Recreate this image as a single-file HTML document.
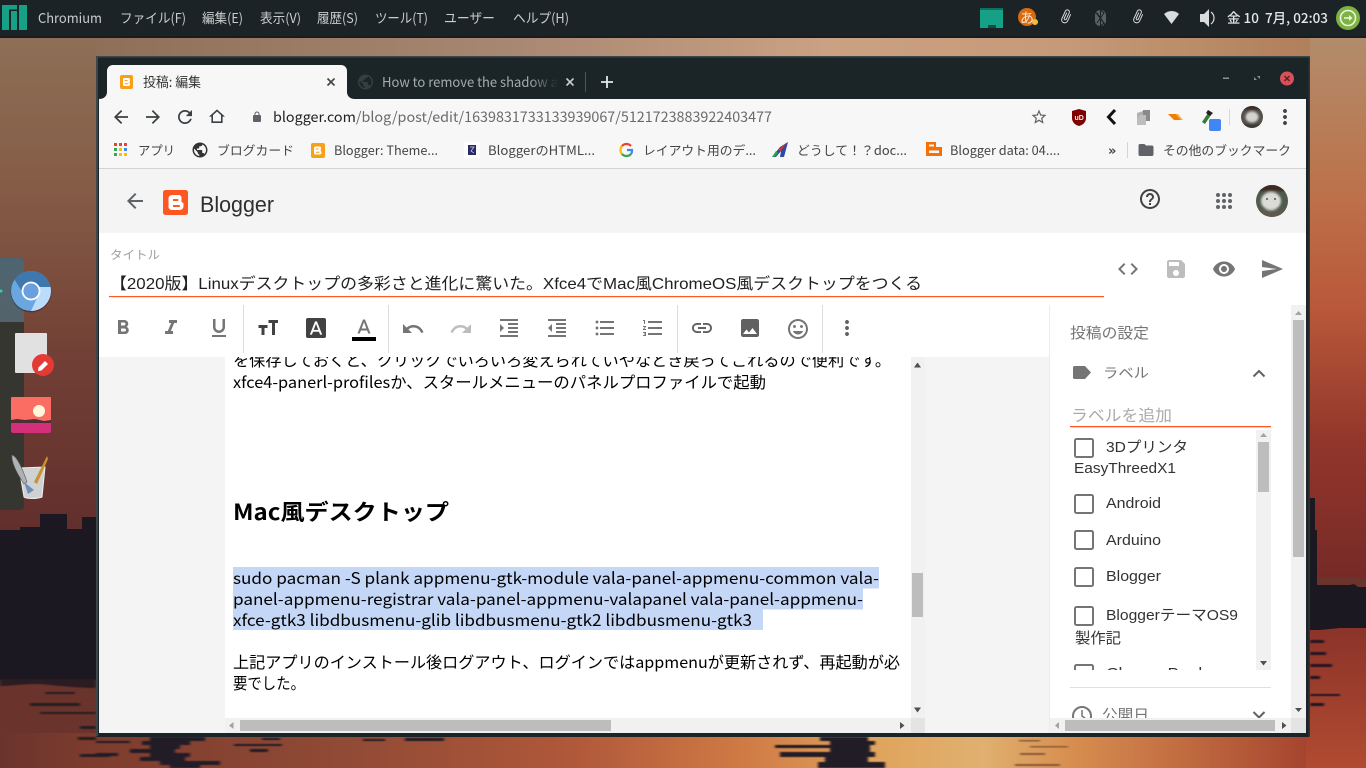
<!DOCTYPE html>
<html lang="ja">
<head>
<meta charset="utf-8">
<title>投稿: 編集</title>
<style>
html,body{margin:0;padding:0;width:1366px;height:768px;overflow:hidden;background:#222}
svg{display:block;position:absolute;left:0;top:0}
text{white-space:pre}
.p{font:13.500px "Noto Sans CJK JP",sans-serif;fill:#c8cdcd}
.ui{font:13.500px "Noto Sans CJK JP",sans-serif;fill:#444}
.bm{font:12.500px "Noto Sans CJK JP",sans-serif;fill:#444}
.ti{font:16px "Liberation Sans","Noto Sans CJK JP",sans-serif;fill:#212121}
.b{font:16px "Noto Sans CJK JP",sans-serif;fill:#000}
.s{font:15px "Liberation Sans","Noto Sans CJK JP",sans-serif;fill:#333}
.g{fill:#757575}
</style>
</head>
<body>
<svg width="1366" height="768" viewBox="0 0 1366 768" xmlns="http://www.w3.org/2000/svg">
<defs>
<linearGradient id="lc" x1="0" y1="0" x2="0" y2="1"><stop offset="0" stop-color="#8e6f56"/><stop offset=".3" stop-color="#855c46"/><stop offset=".65" stop-color="#713f35"/><stop offset="1" stop-color="#622e2c"/></linearGradient>
<linearGradient id="rc" x1="0" y1="0" x2="0" y2="1"><stop offset="0" stop-color="#b28c6b"/><stop offset=".3" stop-color="#bd7049"/><stop offset=".5" stop-color="#b9583a"/><stop offset=".75" stop-color="#92362b"/><stop offset="1" stop-color="#772a27"/></linearGradient>
<linearGradient id="ts" x1="0" y1="0" x2="1" y2="0"><stop offset="0" stop-color="#8f6f57"/><stop offset=".35" stop-color="#a98873"/><stop offset=".6" stop-color="#caa182"/><stop offset=".8" stop-color="#c59a78"/><stop offset="1" stop-color="#b07f5c"/></linearGradient>
<linearGradient id="bs" gradientUnits="userSpaceOnUse" x1="0" y1="0" x2="1366" y2="0"><stop offset="0" stop-color="#6a342d"/><stop offset=".07" stop-color="#7e3c2e"/><stop offset=".25" stop-color="#904a35"/><stop offset=".42" stop-color="#b0583a"/><stop offset=".545" stop-color="#d07a45"/><stop offset=".64" stop-color="#e0a45c"/><stop offset=".72" stop-color="#e0b070"/><stop offset=".78" stop-color="#d89050"/><stop offset=".87" stop-color="#c06a40"/><stop offset=".96" stop-color="#a5432e"/><stop offset="1" stop-color="#a5432e"/></linearGradient>
<linearGradient id="rb" x1="0" y1="0" x2="0" y2="1"><stop offset="0" stop-color="#8a3229"/><stop offset="1" stop-color="#b04b31"/></linearGradient>
<linearGradient id="dk" x1="0" y1="0" x2="0" y2="1"><stop offset="0" stop-color="#4d6470"/><stop offset="1" stop-color="#54636a"/></linearGradient>
<linearGradient id="tf" gradientUnits="userSpaceOnUse" x1="530" y1="0" x2="558" y2="0"><stop offset="0" stop-color="#a4abad"/><stop offset="1" stop-color="#a4abad" stop-opacity="0"/></linearGradient>
<clipPath id="ed"><rect x="225" y="357" width="686" height="361"/></clipPath>
<clipPath id="ll"><rect x="1070" y="430" width="186" height="240"/></clipPath>
<clipPath id="sb"><rect x="1050" y="305" width="241" height="413"/></clipPath>
<clipPath id="av1"><circle cx="1252" cy="117" r="11"/></clipPath>
<clipPath id="av2"><circle cx="1272" cy="201" r="16"/></clipPath>
<filter id="bl" x="-5%" y="-20%" width="110%" height="140%"><feGaussianBlur stdDeviation="1.200 .5"/></filter>
<filter id="bf" x="-30%" y="-30%" width="160%" height="160%"><feGaussianBlur stdDeviation="1"/></filter>
</defs>

<!-- wallpaper -->
<rect x="0" y="38" width="1366" height="730" fill="#6a342d"/>
<rect x="0" y="38" width="100" height="500" fill="url(#lc)"/>
<rect x="1306" y="38" width="60" height="540" fill="url(#rc)"/>
<rect x="96" y="38" width="1214" height="20" fill="url(#ts)"/>
<rect x="0" y="733" width="1366" height="35" fill="url(#bs)"/>
<rect x="1306" y="620" width="60" height="148" fill="url(#rb)"/>
<path d="M0 530H20V527H40V514H67V529H82V517H96V680H0Z" fill="#1c1822"/>
<g filter="url(#bl)">
<path d="M0 679H96V688C80 688 60 686 40 684 20 684 10 686 0 686Z" fill="#2b1c22"/>
<path d="M30 703H80V706H30ZM45 692H75V694H45ZM40 712H96V714H40ZM80 726H96V729H80ZM78 737H96V740H78ZM80 754H110V757H80Z" fill="#251b22"/>
<path d="M1310 640H1324V643H1310ZM1310 652H1326V655H1310ZM1310 664H1332V667H1310ZM1310 676H1320V679H1310ZM1310 694H1340V696H1310ZM1310 703H1324V706H1310Z" fill="#211820"/>
<g fill="#221a26">
<path d="M150 737H205V741H190V745H180V749H175V753H190V757H185V761H220V765H200V768H170V765H160V761H140V757H150V753H130V749H150V745H142V741H150Z"/>
<path d="M820 737H868V741H875V745H870V748H870V752H875V757H868V762H885V768H818V762H825V757H780V752H830V748H775V745H830V741H820Z"/>
<path d="M234 744H282V746H234ZM250 749H268V752H250ZM262 738H280V740H262ZM363 739H385V741H363ZM405 738H444V741H405ZM96 741H130V743H96ZM96 753H118V756H96Z"/>
</g>
<path d="M1019 740H1040V741.500H1019ZM1030 746H1068V747.500H1030ZM1020 753H1045V755H1020ZM1015 764H1060V766H1015Z" fill="#8a5a3a"/>
</g>
<path d="M1310 498H1315V530H1317V585H1350L1354 584L1358 587H1366V628H1340L1320 630H1310Z" fill="#1c1822"/>

<!-- top panel -->
<rect x="0" y="0" width="1366" height="37" fill="#1b2326"/>
<rect x="0" y="36.500" width="1366" height="1" fill="#10161a"/>
<path d="M2 5H17V9.500H9V30H2ZM11 11H17V30H11ZM19 5H27V30H19Z" fill="#16a085"/>
<text class="p" x="38" y="23" textLength="64" lengthAdjust="spacingAndGlyphs">Chromium</text>
<text class="p" x="120" y="23" textLength="66" lengthAdjust="spacingAndGlyphs">ファイル(F)</text>
<text class="p" x="202" y="23" textLength="41" lengthAdjust="spacingAndGlyphs">編集(E)</text>
<text class="p" x="260" y="23" textLength="41" lengthAdjust="spacingAndGlyphs">表示(V)</text>
<text class="p" x="317" y="23" textLength="41" lengthAdjust="spacingAndGlyphs">履歴(S)</text>
<text class="p" x="375" y="23" textLength="53" lengthAdjust="spacingAndGlyphs">ツール(T)</text>
<text class="p" x="444" y="23" textLength="51" lengthAdjust="spacingAndGlyphs">ユーザー</text>
<text class="p" x="513" y="23" textLength="56" lengthAdjust="spacingAndGlyphs">ヘルプ(H)</text>
<text class="p" x="1227" y="23" textLength="101" lengthAdjust="spacingAndGlyphs" style="fill:#e4e7e7;font-weight:500">金 10  7月, 02:03</text>
<!-- tray -->
<rect x="980" y="8" width="23" height="20" fill="#16a085"/>
<rect x="980" y="8" width="23" height="2" fill="#0f6f5e"/>
<rect x="988" y="25" width="8" height="3" fill="#0b4f45"/>
<circle cx="1027" cy="17" r="9" fill="#d96a10"/>
<text x="1020" y="23" style="font:14px 'Noto Sans CJK JP',sans-serif;fill:#f6e6d2">あ</text>
<circle cx="1035" cy="22" r="3" fill="#f3b942"/>
<g fill="#d9dcdc"><path transform="translate(1056,10) rotate(25 12 12) scale(.65)" d="M16.500 6v11.500c0 2.210-1.790 4-4 4s-4-1.790-4-4V5c0-1.380 1.120-2.500 2.500-2.500s2.500 1.120 2.500 2.500v10.500c0 .55-.45 1-1 1s-1-.45-1-1V6H10v9.500c0 1.380 1.120 2.500 2.500 2.500s2.500-1.120 2.500-2.500V5c0-2.210-1.790-4-4-4S7 2.790 7 5v12.500c0 3.040 2.460 5.500 5.500 5.500s5.500-2.460 5.500-5.500V6h-1.500z"/>
<path transform="translate(1128,10) rotate(25 12 12) scale(.65)" d="M16.500 6v11.500c0 2.210-1.790 4-4 4s-4-1.790-4-4V5c0-1.380 1.120-2.500 2.500-2.500s2.500 1.120 2.500 2.500v10.500c0 .55-.45 1-1 1s-1-.45-1-1V6H10v9.500c0 1.380 1.120 2.500 2.500 2.500s2.500-1.120 2.500-2.500V5c0-2.210-1.790-4-4-4S7 2.790 7 5v12.500c0 3.040 2.460 5.500 5.500 5.500s5.500-2.460 5.500-5.500V6h-1.500z"/>
<path d="M1164 14C1168.500 10 1175 10 1179 14L1171.500 24Z"/></g>
<rect x="1095" y="10" width="11" height="16" rx="5" fill="#5a6163"/>
<path d="M1097 13L1104 23L1100.500 26V10L1104 13L1097 23M1094 10L1106 26" stroke="#1b2326" stroke-width="1" fill="none"/>
<path d="M1200 14H1204L1209 9V27L1204 22H1200Z" fill="#d9dcdc"/>
<path d="M1211 12C1215 15 1215 21 1211 24" stroke="#d9dcdc" stroke-width="1.200" fill="none"/>
<circle cx="1348" cy="18" r="12" fill="#7cb342"/>
<circle cx="1348" cy="18" r="7.500" fill="none" stroke="#eef5e0" stroke-width="1.600"/>
<path d="M1344 17.200H1349V15L1352.500 18L1349 21V18.800H1344Z" fill="#eef5e0"/>

<!-- window -->
<rect x="96" y="56" width="1214" height="681" rx="2" fill="#1b2427"/>
<rect x="96" y="56" width="1214" height="1.500" fill="#3d4648"/>
<rect x="96" y="57" width="2" height="679" fill="#3d4648"/>
<rect x="1308.500" y="58" width="1.500" height="678" fill="#2c3538"/>
<!-- tabs -->
<path d="M99 99C104 99 107 96 107 92V71C107 67.500 109.500 65 113 65H341C344.500 65 347 67.500 347 71V92C347 96 350 99 355 99Z" fill="#f7f7f7"/>
<rect x="120" y="75" width="13" height="14" rx="2" fill="#f9a01b"/>
<path d="M124 78H128.500C129.300 78 130 78.700 130 79.500V80.800C130 81.500 129.600 82 129 82.200C129.600 82.400 130 83 130 83.700V84.500C130 85.500 129.300 86 128.500 86H124.500C123.700 86 123 85.500 123 84.700V79C123 78.400 123.400 78 124 78Z" fill="#fff"/>
<path d="M124.700 80H127.500V81H124.700ZM124.700 83.300H128.400V84.300H124.700Z" fill="#f9a01b"/>
<text class="ui" x="143" y="87" textLength="58" lengthAdjust="spacingAndGlyphs" style="fill:#333">投稿: 編集</text>
<path d="M327.500 78.500L334.500 85.500M334.500 78.500L327.500 85.500" stroke="#444" stroke-width="1.600"/>
<path transform="translate(356.500,73) scale(.75)" fill="#353e41" d="M12 2C6.480 2 2 6.480 2 12s4.480 10 10 10 10-4.480 10-10S17.520 2 12 2zm-1 17.930c-3.950-.49-7-3.850-7-7.930 0-.62.08-1.210.21-1.790L9 15v1c0 1.100.9 2 2 2v1.930zm6.900-2.540c-.26-.81-1-1.390-1.900-1.390h-1v-3c0-.55-.45-1-1-1H8v-2h2c.55 0 1-.45 1-1V7h2c1.100 0 2-.9 2-2v-.41c2.930 1.190 5 4.060 5 7.410 0 2.080-.8 3.970-2.100 5.390z"/>
<text class="ui" x="382" y="87" textLength="176" lengthAdjust="spacingAndGlyphs" style="fill:url(#tf)">How to remove the shadow a</text>
<path d="M566.500 78.500L573.500 85.500M573.500 78.500L566.500 85.500" stroke="#c6cbcc" stroke-width="1.600"/>
<rect x="585" y="72" width="1" height="20" fill="#4c5558"/>
<path d="M607 76V88M601 82H613" stroke="#e6e8e8" stroke-width="1.800"/>
<rect x="1223" y="77.500" width="6" height="1.500" fill="#8b9294"/>
<path d="M1254 80L1254 77L1257 80ZM1260 76L1260 79L1257 76Z" fill="#8b9294"/>
<circle cx="1287" cy="78.500" r="7" fill="#d9505a"/>
<path d="M1284.500 76L1289.500 81M1289.500 76L1284.500 81" stroke="#5a1f25" stroke-width="1.500"/>

<!-- toolbar -->
<rect x="99" y="99" width="1207" height="634" fill="#fff"/>
<rect x="99" y="99" width="1207" height="69" fill="#f7f7f7"/>
<rect x="99" y="168" width="1207" height="1" fill="#d2d2d2"/>
<g fill="#3c4043">
<path transform="translate(110.500,106.500) scale(.875)" d="M20 11H7.830l5.590-5.590L12 4l-8 8 8 8 1.410-1.410L7.830 13H20v-2z"/>
<path transform="translate(142.500,106.500) scale(.875)" d="M12 4l-1.410 1.410L16.170 11H4v2h12.170l-5.580 5.590L12 20l8-8z"/>
<path transform="translate(174.500,106.500) scale(.875)" d="M17.650 6.350C16.200 4.900 14.210 4 12 4c-4.420 0-7.990 3.580-7.990 8s3.570 8 7.990 8c3.730 0 6.840-2.550 7.730-6h-2.080c-.82 2.330-3.040 4-5.650 4-3.310 0-6-2.690-6-6s2.690-6 6-6c1.660 0 3.140.69 4.220 1.780L13 11h7V4l-2.350 2.350z"/>
<path transform="translate(207.400,107) scale(.8)" fill-rule="evenodd" d="M12 3L2 12h3v8h14v-8h3L12 3zM12 5.690l5 4.500V18H7v-7.810l5-4.500z"/>
</g>
<path transform="translate(251,111) scale(.5)" fill="#5f6368" d="M18 8h-1V6c0-2.760-2.240-5-5-5S7 3.240 7 6v2H6c-1.100 0-2 .9-2 2v10c0 1.100.9 2 2 2h12c1.100 0 2-.9 2-2V10c0-1.100-.9-2-2-2zM15.100 8H8.900V6c0-1.710 1.390-3.100 3.100-3.100 1.710 0 3.100 1.390 3.100 3.100v2z"/>
<text x="273" y="122" textLength="499" lengthAdjust="spacingAndGlyphs" style="font:14px 'Noto Sans CJK JP',sans-serif;fill:#6a6a6a"><tspan fill="#222">blogger.com</tspan>/blog/post/edit/1639831733133939067/5121723883922403477</text>
<path transform="translate(1030,108) scale(.75)" fill="#5f6368" d="M22 9.240l-7.190-.62L12 2 9.190 8.630 2 9.240l5.460 4.730L5.820 21 12 17.270 18.180 21l-1.630-7.030L22 9.240zM12 15.400l-3.760 2.270 1-4.280-3.320-2.880 4.380-.38L12 6.100l1.710 4.040 4.380.38-3.320 2.880 1 4.280L12 15.400z"/>
<path d="M1072 111L1079 109L1086 111V118C1086 122 1083 125 1079 126C1075 125 1072 122 1072 118Z" fill="#800000"/>
<text x="1074.500" y="120" style="font:bold 7px 'Liberation Sans',sans-serif;fill:#eee">uD</text>
<path d="M1115 110L1108.500 117L1115 124" fill="none" stroke="#111" stroke-width="3"/>
<path d="M1137 113L1143 111V123H1137Z" fill="#b0b0b0"/><path d="M1143 110H1150V121H1143Z" fill="#8a8a8a"/><path d="M1141 115H1146V125H1137V118Z" fill="#bdbdbd"/>
<path d="M1168 114H1176L1181 120H1174Z" fill="#f57c00"/><path d="M1176 114H1178L1183 120H1181Z" fill="#fbb040"/>
<path d="M1202 122L1208 113L1211 115L1205 124Z" fill="#2e7d32"/><path d="M1208 110L1213 113L1210 116L1206 113Z" fill="#222"/>
<rect x="1209" y="119" width="12" height="12" rx="2" fill="#4285f4"/>
<rect x="1229" y="109" width="1" height="16" fill="#d8d8d8"/>
<g clip-path="url(#av1)"><rect x="1240" y="105" width="24" height="24" fill="#55524e"/><g filter="url(#bf)"><ellipse cx="1252" cy="117" rx="6.500" ry="5.500" fill="#d4d4cf"/><rect x="1241" y="104" width="22" height="6" fill="#3e2f28"/><rect x="1241" y="124" width="22" height="5" fill="#3a3a34"/></g></g>
<path transform="translate(1273,105)" fill="#444" d="M12 8c1.100 0 2-.9 2-2s-.9-2-2-2-2 .9-2 2 .9 2 2 2zm0 2c-1.100 0-2 .9-2 2s.9 2 2 2 2-.9 2-2-.9-2-2-2zm0 6c-1.100 0-2 .9-2 2s.9 2 2 2 2-.9 2-2-.9-2-2-2z"/>

<!-- bookmarks -->
<g>
<rect x="114" y="143" width="3" height="3" fill="#ea4335"/><rect x="119" y="143" width="3" height="3" fill="#ea4335"/><rect x="124" y="143" width="3" height="3" fill="#ea4335"/>
<rect x="114" y="148" width="3" height="3" fill="#34a853"/><rect x="119" y="148" width="3" height="3" fill="#fbbc05"/><rect x="124" y="148" width="3" height="3" fill="#4285f4"/>
<rect x="114" y="153" width="3" height="3" fill="#34a853"/><rect x="119" y="153" width="3" height="3" fill="#fbbc05"/><rect x="124" y="153" width="3" height="3" fill="#fbbc05"/>
</g>
<text class="bm" x="138" y="155" textLength="37" lengthAdjust="spacingAndGlyphs">アプリ</text>
<path transform="translate(191,141) scale(.75)" fill="#333" d="M12 2C6.480 2 2 6.480 2 12s4.480 10 10 10 10-4.480 10-10S17.520 2 12 2zm-1 17.930c-3.950-.49-7-3.850-7-7.930 0-.62.08-1.210.21-1.790L9 15v1c0 1.100.9 2 2 2v1.930zm6.900-2.540c-.26-.81-1-1.390-1.900-1.390h-1v-3c0-.55-.45-1-1-1H8v-2h2c.55 0 1-.45 1-1V7h2c1.100 0 2-.9 2-2v-.41c2.930 1.190 5 4.060 5 7.410 0 2.080-.8 3.970-2.100 5.390z"/>
<text class="bm" x="217" y="155" textLength="77" lengthAdjust="spacingAndGlyphs">ブログカード</text>
<rect x="311" y="143" width="14" height="15" rx="2" fill="#f9a01b"/>
<path d="M315.500 146.500H319.500C320.500 146.500 321 147 321 148V149.500C321 150 320.700 150.500 320.200 150.700C320.700 151 321.500 151.500 321.500 152V153C321.500 154 320.500 154.500 319.500 154.500H315.500C314.700 154.500 314 154 314 153.200V148C314 147 314.700 146.500 315.500 146.500Z" fill="#fff"/>
<path d="M316 148.500H318.500V149.500H316ZM316 151.800H319.500V152.800H316Z" fill="#f9a01b"/>
<text class="bm" x="334" y="155" textLength="104" lengthAdjust="spacingAndGlyphs">Blogger: Theme...</text>
<rect x="464" y="142" width="16" height="16" fill="#fff"/><rect x="468" y="145" width="8" height="10" fill="#2a2a6a"/><path d="M470 147H474L471 151L474 153" stroke="#ddd" fill="none" stroke-width=".7"/>
<text class="bm" x="488" y="155" textLength="107" lengthAdjust="spacingAndGlyphs">BloggerのHTML...</text>
<g fill="none" stroke-width="2.200"><path d="M631 146A6 6 0 0 0 622 146" stroke="#ea4335"/><path d="M622 146A6 6 0 0 0 622 154" stroke="#fbbc05"/><path d="M622 154A6 6 0 0 0 631 154" stroke="#34a853"/><path d="M631 154A6 6 0 0 0 632 150H627" stroke="#4285f4"/></g>
<text class="bm" x="643" y="155" textLength="113" lengthAdjust="spacingAndGlyphs">レイアウト用のデ...</text>
<path d="M772 157L780 147L788 142L784 157H780L781 151L776 157Z" fill="#2c4aa0"/><path d="M772 157L776 151L778 153L775 157Z" fill="#2e9e4f"/><path d="M778 150L786 143L781 151Z" fill="#d8322a"/>
<text class="bm" x="797" y="155" textLength="110" lengthAdjust="spacingAndGlyphs">どうして！？doc...</text>
<path fill-rule="evenodd" d="M926 142H936V147H942V156H926ZM929 144.500V146.500H934V144.500ZM929 150.500V153H939V150.500Z" fill="#f57009"/>
<text class="bm" x="950" y="155" textLength="110" lengthAdjust="spacingAndGlyphs">Blogger data: 04....</text>
<text x="1108" y="155" style="font:bold 13px 'DejaVu Sans',sans-serif;fill:#444">»</text>
<rect x="1127" y="142" width="1" height="16" fill="#d4d4d4"/>
<path transform="translate(1137,141) scale(.75)" fill="#5f6368" d="M10 4H4c-1.100 0-1.990.9-1.990 2L2 18c0 1.100.9 2 2 2h16c1.100 0 2-.9 2-2V8c0-1.100-.9-2-2-2h-8l-2-2z"/>
<text class="bm" x="1163" y="155" textLength="128" lengthAdjust="spacingAndGlyphs">その他のブックマーク</text>

<!-- blogger header -->
<rect x="99" y="169" width="1207" height="64" fill="#f4f4f4"/>
<path transform="translate(123,189)" fill="#5f6368" d="M20 11H7.830l5.590-5.590L12 4l-8 8 8 8 1.410-1.410L7.830 13H20v-2z"/>
<rect x="163" y="190" width="25" height="25" rx="2.500" fill="#ff5722"/>
<path fill-rule="evenodd" d="M172 195H178.500C180.500 195 181.500 196.200 181.500 198V200.500C181.500 201.500 181 202 182.500 202.500C183 202.700 183.500 203.200 183.500 204V206C183.500 208.500 181.800 210 179.500 210H172C169.800 210 168.500 208.500 168.500 206.500V198.500C168.500 196.500 170 195 172 195ZM173 199V201H177.500C178 201 178.500 200.600 178.500 200C178.500 199.400 178 199 177.500 199ZM173 205V207H179C179.500 207 180 206.600 180 206C180 205.400 179.500 205 179 205Z" fill="#fff"/>
<text x="200" y="212" textLength="74" lengthAdjust="spacingAndGlyphs" style="font:22px 'Liberation Sans',sans-serif;fill:#2f2f2f">Blogger</text>
<path transform="translate(1138,187)" fill="#424242" d="M11 18h2v-2h-2v2zm1-16C6.480 2 2 6.480 2 12s4.480 10 10 10 10-4.480 10-10S17.520 2 12 2zm0 18c-4.410 0-8-3.590-8-8s3.590-8 8-8 8 3.590 8 8-3.590 8-8 8zm0-14c-2.210 0-4 1.790-4 4h2c0-1.100.9-2 2-2s2 .9 2 2c0 2-3 1.750-3 5h2c0-2.250 3-2.500 3-5 0-2.210-1.790-4-4-4z"/>
<g fill="#5f6368"><circle cx="1218" cy="195" r="2"/><circle cx="1224" cy="195" r="2"/><circle cx="1230" cy="195" r="2"/><circle cx="1218" cy="201" r="2"/><circle cx="1224" cy="201" r="2"/><circle cx="1230" cy="201" r="2"/><circle cx="1218" cy="207" r="2"/><circle cx="1224" cy="207" r="2"/><circle cx="1230" cy="207" r="2"/></g>
<g clip-path="url(#av2)"><rect x="1256" y="185" width="32" height="32" fill="#4f5a4c"/><g filter="url(#bf)"><rect x="1256" y="184" width="32" height="7" fill="#3e2a22"/><ellipse cx="1271" cy="201" rx="10" ry="9" fill="#dcdcd6"/><rect x="1256" y="210" width="32" height="7" fill="#5f5a50"/></g><circle cx="1267" cy="199" r="1" fill="#555"/><circle cx="1275" cy="199" r="1" fill="#555"/></g>

<!-- title -->
<text x="110" y="259" textLength="50" lengthAdjust="spacingAndGlyphs" style="font:12px 'Noto Sans CJK JP',sans-serif;fill:#9e9e9e">タイトル</text>
<text class="ti" x="110" y="289" textLength="812" lengthAdjust="spacingAndGlyphs">【2020版】Linuxデスクトップの多彩さと進化に驚いた。Xfce4でMac風ChromeOS風デスクトップをつくる</text>
<rect x="109" y="296" width="995" height="1.200" fill="#ff5722"/>
<path transform="translate(1116,257)" fill="#757575" d="M9.400 16.600L4.800 12l4.600-4.600L8 6l-6 6 6 6 1.400-1.400zm5.200 0l4.600-4.600-4.600-4.600L16 6l6 6-6 6-1.400-1.400z"/>
<path transform="translate(1164,257)" fill="#bdbdbd" d="M17 3H5c-1.110 0-2 .9-2 2v14c0 1.100.89 2 2 2h14c1.100 0 2-.9 2-2V7l-4-4zm-5 16c-1.660 0-3-1.340-3-3s1.340-3 3-3 3 1.340 3 3-1.340 3-3 3zm3-10H5V5h10v4z"/>
<path transform="translate(1212,257)" fill="#757575" d="M12 4.500C7 4.500 2.730 7.610 1 12c1.730 4.390 6 7.500 11 7.500s9.270-3.110 11-7.500c-1.730-4.390-6-7.500-11-7.500zM12 17c-2.760 0-5-2.240-5-5s2.240-5 5-5 5 2.240 5 5-2.240 5-5 5zm0-8c-1.660 0-3 1.340-3 3s1.340 3 3 3 3-1.340 3-3-1.340-3-3-3z"/>
<path transform="translate(1260,257)" fill="#757575" d="M2.010 21L23 12 2.010 3 2 10l15 2-15 2z"/>

<!-- editor toolbar icons -->
<g class="g">
<path transform="translate(111,316)" d="M15.600 10.790c.97-.67 1.650-1.770 1.650-2.790 0-2.260-1.750-4-4-4H7v14h7.040c2.090 0 3.710-1.700 3.710-3.790 0-1.520-.86-2.820-2.150-3.420zM10 6.500h3c.83 0 1.500.67 1.500 1.500s-.67 1.500-1.500 1.500h-3v-3zm3.500 9H10v-3h3.500c.83 0 1.500.67 1.500 1.500s-.67 1.500-1.500 1.500z"/>
<path transform="translate(159,316)" d="M10 4v3h2.210l-3.420 8H6v3h8v-3h-2.210l3.420-8H18V4z"/>
<path transform="translate(207,316)" d="M12 17c3.310 0 6-2.690 6-6V3h-2.500v8c0 1.930-1.570 3.500-3.500 3.500S8.500 12.930 8.500 11V3H6v8c0 3.310 2.690 6 6 6zm-7 2v2h14v-2H5z"/>
<path transform="translate(401,317)" d="M12.500 8c-2.650 0-5.050.99-6.900 2.600L2 7v9h9l-3.620-3.620c1.390-1.160 3.160-1.880 5.120-1.880 3.540 0 6.550 2.310 7.600 5.500l2.370-.78C21.080 11.030 17.150 8 12.500 8z"/>
<path transform="translate(449,317)" fill="#bdbdbd" d="M18.400 10.600C16.550 8.990 14.150 8 11.500 8c-4.650 0-8.580 3.030-9.960 7.220L3.900 16c1.050-3.190 4.050-5.500 7.600-5.500 1.950 0 3.730.72 5.120 1.880L13 16h9V7l-3.600 3.600z"/>
<path transform="translate(497,316)" d="M3 21h18v-2H3v2zM3 8v8l4-4-4-4zm8 9h10v-2H11v2zM3 3v2h18V3H3zm8 6h10V7H11v2zm0 4h10v-2H11v2z"/>
<path transform="translate(545,316)" d="M11 17h10v-2H11v2zm-8-5l4 4V8l-4 4zm0 9h18v-2H3v2zM3 3v2h18V3H3zm8 6h10V7H11v2zm0 4h10v-2H11v2z"/>
<path transform="translate(593,316)" d="M4 10.500c-.83 0-1.500.67-1.500 1.500s.67 1.500 1.500 1.500 1.500-.67 1.500-1.500-.67-1.500-1.500-1.500zm0-6c-.83 0-1.500.67-1.500 1.500S3.170 7.500 4 7.500 5.500 6.830 5.500 6 4.830 4.500 4 4.500zm0 12c-.83 0-1.500.68-1.500 1.500s.68 1.500 1.500 1.500 1.500-.68 1.500-1.500-.67-1.500-1.500-1.500zM7 19h14v-2H7v2zm0-6h14v-2H7v2zm0-8v2h14V5H7z"/>
<path transform="translate(641,316)" d="M2 17h2v.5H3v1h1v.5H2v1h3v-4H2v1zm1-9h1V4H2v1h1v3zm-1 3h1.800L2 13.100v.9h3v-1H3.200L5 10.900V10H2v1zm5-6v2h14V5H7zm0 14h14v-2H7v2zm0-6h14v-2H7v2z"/>
</g>
<path transform="translate(256,316)" fill="#424242" d="M2.500 9v3h3v7h3v-7h3V9h-9zM12.500 4v3h3.500v12h3V7h3V4h-9.500z"/>
<rect x="306" y="318" width="20" height="20" rx="2" fill="#424242"/>
<path transform="translate(304.600,318.500) scale(.95)" fill="#fff" d="M11 3L5.500 17h2.250l1.120-3h6.250l1.120 3h2.250L13 3h-2zm-1.380 9L12 5.670 14.380 12H9.620z"/>
<path transform="translate(352,316.500)" fill="#757575" d="M11 3L5.500 17h2.250l1.120-3h6.250l1.120 3h2.250L13 3h-2zm-1.380 9L12 5.670 14.380 12H9.620z"/>
<rect x="352" y="337" width="24" height="4" fill="#000"/>
<path transform="translate(690,316)" fill="#616161" d="M3.900 12c0-1.710 1.390-3.100 3.100-3.100h4V7H7c-2.760 0-5 2.240-5 5s2.240 5 5 5h4v-1.900H7c-1.710 0-3.100-1.390-3.100-3.100zM8 13h8v-2H8v2zm9-6h-4v1.900h4c1.710 0 3.100 1.390 3.100 3.100s-1.390 3.100-3.100 3.100h-4V17h4c2.760 0 5-2.240 5-5s-2.240-5-5-5z"/>
<path transform="translate(738,316)" fill="#616161" d="M21 19V5c0-1.100-.9-2-2-2H5c-1.100 0-2 .9-2 2v14c0 1.100.9 2 2 2h14c1.100 0 2-.9 2-2zM8.500 13.500l2.500 3.010L14.500 12l4.500 6H5l3.500-4.500z"/>
<path transform="translate(786,317)" fill="#757575" d="M11.990 2C6.470 2 2 6.480 2 12s4.470 10 9.990 10C17.520 22 22 17.520 22 12S17.520 2 11.990 2zM12 20c-4.420 0-8-3.580-8-8s3.580-8 8-8 8 3.580 8 8-3.580 8-8 8zm3.500-9c.83 0 1.500-.67 1.500-1.500S16.330 8 15.500 8 14 8.670 14 9.500s.67 1.500 1.500 1.500zm-7 0c.83 0 1.500-.67 1.500-1.500S9.330 8 8.500 8 7 8.670 7 9.500 7.670 11 8.500 11zm3.500 6.500c2.330 0 4.310-1.460 5.110-3.500H6.890c.8 2.040 2.780 3.500 5.110 3.500z"/>
<path transform="translate(835,316)" fill="#616161" d="M12 8c1.100 0 2-.9 2-2s-.9-2-2-2-2 .9-2 2 .9 2 2 2zm0 2c-1.100 0-2 .9-2 2s.9 2 2 2 2-.9 2-2-.9-2-2-2zm0 6c-1.100 0-2 .9-2 2s.9 2 2 2 2-.9 2-2-.9-2-2-2z"/>
<g fill="#dcdcdc"><rect x="243" y="305" width="1" height="48"/><rect x="388" y="305" width="1" height="48"/><rect x="677" y="305" width="1" height="48"/><rect x="822" y="305" width="1" height="48"/></g>

<!-- editor area -->
<rect x="99" y="357" width="951" height="376" fill="#f4f4f4"/>
<rect x="225" y="357" width="686" height="361" fill="#fff"/>
<g clip-path="url(#ed)">
<text class="b" x="233" y="366" textLength="658" lengthAdjust="spacingAndGlyphs">を保存しておくと、クリックでいろいろ変えられていやなとき戻ってこれるので便利です。</text>
<text class="b" x="233" y="388" textLength="533" lengthAdjust="spacingAndGlyphs">xfce4-panerl-profilesか、スタールメニューのパネルプロファイルで起動</text>
<text x="233" y="520" textLength="216" lengthAdjust="spacingAndGlyphs" style="font:bold 22px 'Noto Sans CJK JP',sans-serif;fill:#000">Mac風デスクトップ</text>
<rect x="233" y="567" width="646" height="21.500" fill="#c5d7f7"/>
<rect x="233" y="588" width="630" height="21.500" fill="#c5d7f7"/>
<rect x="233" y="609" width="530" height="21" fill="#c5d7f7"/>
<text class="b" x="233" y="584" textLength="646" lengthAdjust="spacingAndGlyphs">sudo pacman -S plank appmenu-gtk-module vala-panel-appmenu-common vala-</text>
<text class="b" x="233" y="605" textLength="630" lengthAdjust="spacingAndGlyphs">panel-appmenu-registrar vala-panel-appmenu-valapanel vala-panel-appmenu-</text>
<text class="b" x="233" y="626" textLength="519" lengthAdjust="spacingAndGlyphs">xfce-gtk3 libdbusmenu-glib libdbusmenu-gtk2 libdbusmenu-gtk3</text>
<text class="b" x="233" y="668" textLength="667" lengthAdjust="spacingAndGlyphs">上記アプリのインストール後ログアウト、ログインではappmenuが更新されず、再起動が必</text>
<text class="b" x="233" y="689" textLength="72" lengthAdjust="spacingAndGlyphs">要でした。</text>
</g>
<!-- editor scrollbars -->
<rect x="911" y="357" width="14" height="361" fill="#f1f1f1"/>
<rect x="912" y="573" width="11" height="44" fill="#bdbdbd"/>
<path d="M914 367.500L917.500 362.500L921 367.500Z" fill="#505050"/>
<path d="M914 707.500L917.500 712.500L921 707.500Z" fill="#505050"/>
<rect x="225" y="718" width="686" height="15" fill="#f1f1f1"/>
<rect x="911" y="718" width="14" height="15" fill="#e4e4e4"/>
<rect x="240" y="720" width="371" height="11" fill="#bdbdbd"/>
<path d="M233.500 722L229 725.500L233.500 729Z" fill="#a3a3a3"/>
<path d="M900 722L904.500 725.500L900 729Z" fill="#505050"/>

<!-- sidebar -->
<rect x="1050" y="305" width="241" height="413" fill="#fff"/>
<rect x="1049" y="305" width="1" height="428" fill="#ececec"/>
<g clip-path="url(#sb)">
<text x="1070" y="338" textLength="79" lengthAdjust="spacingAndGlyphs" style="font:15px 'Noto Sans CJK JP',sans-serif;fill:#757575">投稿の設定</text>
<path d="M1074.500 366H1085L1091 372.500L1085 379H1074.500C1073.500 379 1073 378.300 1073 377.500V367.500C1073 366.700 1073.500 366 1074.500 366Z" fill="#757575"/>
<text x="1103" y="378" textLength="46" lengthAdjust="spacingAndGlyphs" style="font:14px 'Noto Sans CJK JP',sans-serif;fill:#757575">ラベル</text>
<path d="M1253.500 376.500L1259 371L1264.500 376.500" fill="none" stroke="#616161" stroke-width="2"/>
<text x="1071" y="421" textLength="101" lengthAdjust="spacingAndGlyphs" style="font:16px 'Noto Sans CJK JP',sans-serif;fill:#ababab">ラベルを追加</text>
<rect x="1070" y="426" width="201" height="1.300" fill="#ff5722"/>
<g clip-path="url(#ll)">
<g fill="#fff" stroke="#757575" stroke-width="2">
<rect x="1075" y="439" width="18" height="18" rx="1.500"/>
<rect x="1075" y="495" width="18" height="18" rx="1.500"/>
<rect x="1075" y="531" width="18" height="18" rx="1.500"/>
<rect x="1075" y="568" width="18" height="18" rx="1.500"/>
<rect x="1075" y="607" width="18" height="18" rx="1.500"/>
<rect x="1075" y="665" width="18" height="18" rx="1.500"/>
</g>
<text class="s" x="1106" y="452" textLength="82" lengthAdjust="spacingAndGlyphs">3Dプリンタ</text>
<text class="s" x="1074" y="473" textLength="102" lengthAdjust="spacingAndGlyphs">EasyThreedX1</text>
<text class="s" x="1106" y="508" textLength="55" lengthAdjust="spacingAndGlyphs">Android</text>
<text class="s" x="1106" y="545" textLength="55" lengthAdjust="spacingAndGlyphs">Arduino</text>
<text class="s" x="1106" y="581" textLength="55" lengthAdjust="spacingAndGlyphs">Blogger</text>
<text class="s" x="1106" y="620" textLength="132" lengthAdjust="spacingAndGlyphs">BloggerテーマOS9</text>
<text class="s" x="1075" y="643" textLength="46" lengthAdjust="spacingAndGlyphs">製作記</text>
<text class="s" x="1106" y="678" textLength="101" lengthAdjust="spacingAndGlyphs">ChromeBook</text>
</g>
<rect x="1256" y="430" width="15" height="240" fill="#f1f1f1"/>
<rect x="1258" y="442" width="11" height="50" fill="#bdbdbd"/>
<path d="M1260 437L1263.500 433L1267 437Z" fill="#a3a3a3"/>
<path d="M1260 661L1263.500 665.500L1267 661Z" fill="#505050"/>
<rect x="1070" y="687" width="201" height="1" fill="#e0e0e0"/>
<circle cx="1082" cy="716" r="9" fill="none" stroke="#757575" stroke-width="2"/>
<path d="M1082 710V716L1086 719" fill="none" stroke="#757575" stroke-width="1.500"/>
<text x="1102" y="720" textLength="47" lengthAdjust="spacingAndGlyphs" style="font:15px 'Noto Sans CJK JP',sans-serif;fill:#757575">公開日</text>
<path d="M1253.500 712L1259 717.500L1264.500 712" fill="none" stroke="#616161" stroke-width="2"/>
</g>
<!-- page scrollbars -->
<rect x="1291" y="305" width="15" height="413" fill="#f1f1f1"/>
<rect x="1293" y="320" width="11" height="237" fill="#bdbdbd"/>
<path d="M1295 315L1298.500 311L1302 315Z" fill="#a3a3a3"/>
<path d="M1295 708L1298.500 712L1302 708Z" fill="#505050"/>
<rect x="1050" y="718" width="241" height="15" fill="#f1f1f1"/>
<rect x="1291" y="718" width="15" height="15" fill="#e4e4e4"/>
<rect x="1065" y="720" width="210" height="11" fill="#bdbdbd"/>
<path d="M1059 722L1055 725.500L1059 729Z" fill="#a3a3a3"/>
<path d="M1282 722L1286.500 725.500L1282 729Z" fill="#505050"/>

<!-- dock -->
<path d="M0 258H20C22.500 258 24 259.500 24 262V506C24 508.500 22.500 510 20 510H0Z" fill="#35362f"/>
<path d="M0 258H20C22.500 258 24 259.500 24 262V322H0Z" fill="url(#dk)"/>
<circle cx="1" cy="291" r="1.500" fill="#2ed3a8"/>
<circle cx="31" cy="292" r="20.500" fill="#000" opacity=".25"/>
<circle cx="31" cy="291" r="20" fill="#6aa6e0"/>
<path d="M14.500 279.500A20 20 0 0 1 50.500 287L31 287C27 287 24 289 23 293Z" fill="#3f78ae"/>
<path d="M50.500 287A20 20 0 0 1 31 311L37 298C39 295 40 291 38 287Z" fill="#bcdcfb"/>
<circle cx="31" cy="291" r="8.500" fill="#6c9fdf" stroke="#fff" stroke-width="1.800"/>
<rect x="15" y="333" width="32" height="40" rx="1" fill="#e1e1e1"/>
<circle cx="43" cy="365" r="11" fill="#e53935"/>
<path d="M38 371L38.500 367.500L45 361L48 364L41.500 370.500Z" fill="#fff"/>
<rect x="11" y="397" width="40" height="27" rx="1" fill="#fb6d63"/>
<circle cx="39" cy="411" r="6" fill="#fff6dc"/>
<path d="M11 420L17 419L25 420L35 419L44 421L51 420V424H11Z" fill="#4b2f34"/>
<path d="M11 423H51V431C51 432 50 433 49 433H13C12 433 11 432 11 431Z" fill="#d32f7a"/>
<path d="M19 468L45 467L42 497C37 499 27 499 24 497Z" fill="#cfd2d2" stroke="#eee" stroke-width="1"/>
<path d="M12 455C17 456 23 470 27 482L24 484C18 475 11 463 12 455Z" fill="#aeb2b4" stroke="#555" stroke-width=".6"/>
<path d="M47 456L34 482L37 484L48 459Z" fill="#c9922e"/>
<path d="M24 482L34 490L28 494Z" fill="#6d8fb8"/>
</svg>
</body>
</html>
